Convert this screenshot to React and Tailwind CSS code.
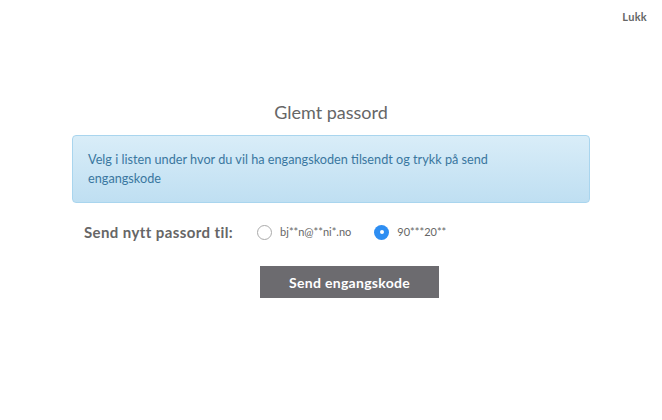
export default function App() {
  return (
    <div className="relative w-[662px] h-[420px] bg-white font-['Lato',sans-serif]">
      <button className="absolute top-[9px] right-[15px] text-[11px] font-bold text-[#666] tracking-[0.3px]">
        Lukk
      </button>

      <div className="flex flex-col items-center pt-[100px]">
        <h1 className="text-[18px] leading-[24px] text-[#666] font-normal">Glemt passord</h1>

        <div className="mt-[11px] w-[518px] rounded-[4px] border border-[#a9d5ee] bg-gradient-to-b from-[#d9edf8] to-[#bfdff2] pl-[15px] pr-[45px] py-[14px] text-[12.7px] leading-[19px] text-[#3a77a0]">
          Velg i listen under hvor du vil ha engangskoden tilsendt og trykk på send engangskode
        </div>

        <div className="mt-[19px] w-[518px] pl-[12px] grid grid-cols-[auto_1fr] gap-x-[24px] gap-y-[24px] items-center">
          <span className="text-[15px] leading-[20px] font-bold text-[#666] tracking-[0.4px]">Send nytt passord til:</span>
          <div className="flex items-center">
            <label className="flex items-center">
              <span className="w-[15px] h-[15px] rounded-full border border-[#aaa] bg-white" />
              <span className="ml-[8px] text-[11px] text-[#666]">bj**n@**ni*.no</span>
            </label>
            <label className="ml-[23px] flex items-center">
              <span className="w-[15px] h-[15px] rounded-full bg-[#2e8ef2] flex items-center justify-center">
                <span className="w-[4px] h-[4px] rounded-full bg-white" />
              </span>
              <span className="ml-[8px] text-[11px] text-[#666]">90***20**</span>
            </label>
          </div>
          <div />
          <button className="ml-[3px] w-[179px] h-[32px] bg-[#6c6b6f] text-white text-[14px] font-bold tracking-[0.3px]">
            Send engangskode
          </button>
        </div>
      </div>
    </div>
  );
}
